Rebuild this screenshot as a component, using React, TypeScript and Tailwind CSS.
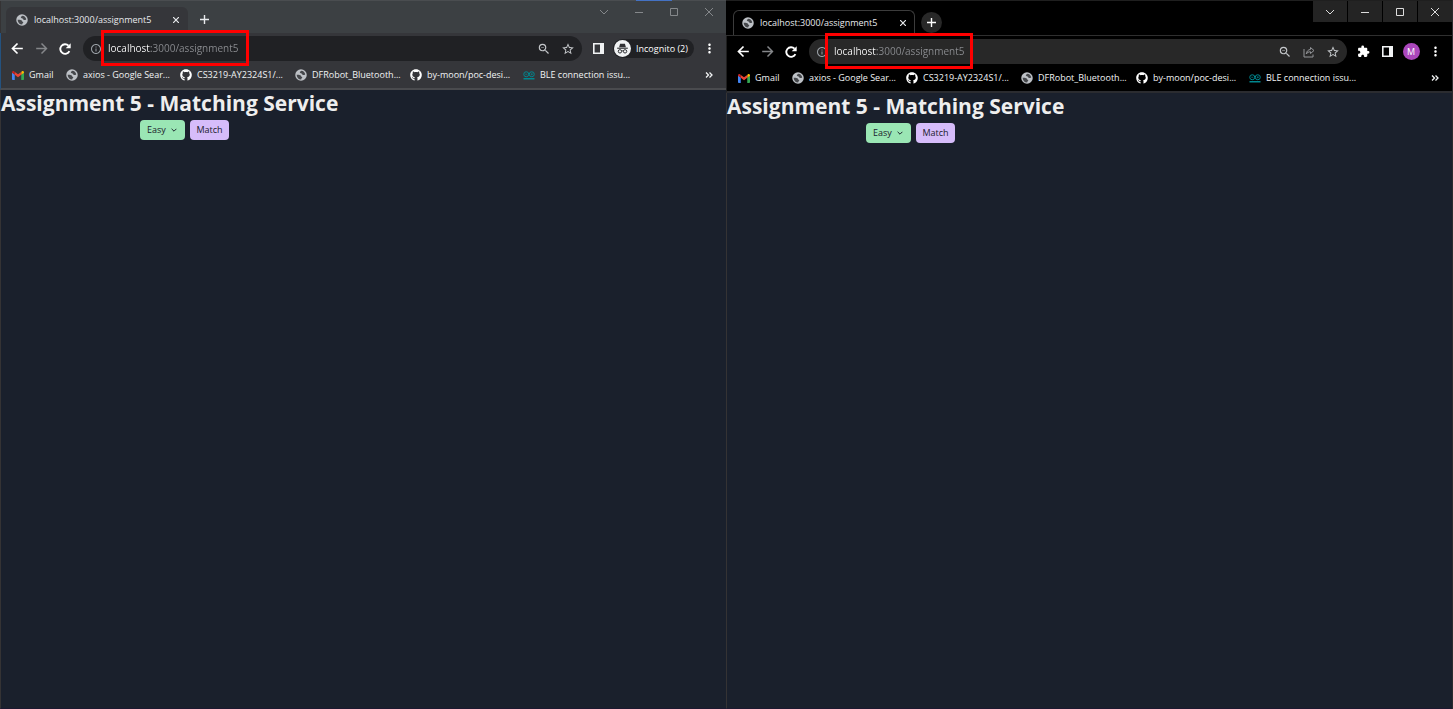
import type { ReactNode } from 'react';
import { FaGithub } from 'react-icons/fa';
import {
  MdExtension,
  MdInfoOutline,
  MdMoreVert,
  MdStarBorder,
  MdZoomOut,
} from 'react-icons/md';

function BackIcon() {
  return (
    <svg viewBox="0 0 24 24" className="size-[15px]" fill="none" stroke="currentColor" strokeWidth="2.700">
      <path d="M20.500 12H5M12 4l-8 8 8 8" />
    </svg>
  );
}

function ForwardIcon() {
  return (
    <svg viewBox="0 0 24 24" className="size-[15px] text-[#85878a]" fill="none" stroke="currentColor" strokeWidth="2.300">
      <path d="M3.500 12H19M12 4l8 8-8 8" />
    </svg>
  );
}

function ReloadIcon() {
  return (
    <svg viewBox="0 0 24 24" className="size-4">
      <path
        d="M18.600 15.200A7.200 7.200 0 1 1 17.300 7"
        fill="none"
        stroke="currentColor"
        strokeWidth="2.800"
      />
      <path d="M20.500 3.500V11H13z" fill="currentColor" />
    </svg>
  );
}

function GlobeIcon() {
  return (
    <svg viewBox="0 0 24 24" className="size-3 shrink-0">
      <circle cx="12" cy="12" r="11.500" fill="#bdc1c6" />
      <path d="M12.500 3.500c4 .3 7.300 3 8 7-1.500 2-4 2.300-5.500.8-1-.9-.6-2.100-2-2.400-1.800-.4-3.300-.6-3.300-2.300 0-1.700 1.800-1.300 2.800-3.100z" fill="#45474b" />
      <path d="M3.200 11.500c3-.4 6.500-.2 8.300 1.600 1.300 1.400.6 2.700 2.500 3.100.8.200.6 1.800-.6 2.500-.8.500-1 1.500-1 2.300-5 .2-9-4-9.200-9.500z" fill="#45474b" />
    </svg>
  );
}

function GmailIcon() {
  return (
    <svg viewBox="0 0 24 18" className="h-[9px] w-3">
      <path d="M0 3v13.400c0 .9.7 1.600 1.600 1.600h3.900V7.100z" fill="#4285f4" />
      <path d="M18.500 18h3.900c.9 0 1.600-.7 1.600-1.600V3l-5.500 4.100z" fill="#34a853" />
      <path d="M18.500 1.800v5.900L24 3.600V2.500C24 .4 21.600-.8 19.900.5z" fill="#fbbc04" />
      <path d="M5.500 7.700V1.800L12 6.700l6.500-4.900v5.900L12 12.600z" fill="#ea4335" />
      <path d="M0 2.500v1.100l5.500 4.100V1.800L4.100.5C2.400-.8 0 .4 0 2.500z" fill="#c5221f" />
    </svg>
  );
}

function ArduinoIcon() {
  return (
    <svg viewBox="0 0 24 18" className="h-[9px] w-3" fill="none" stroke="#00878f" strokeWidth="2">
      <circle cx="6.500" cy="6.500" r="5" />
      <circle cx="17.500" cy="6.500" r="5" />
      <path d="M4.500 6.500h4M15.500 6.500h4M17.500 4.500v4" strokeWidth="1.500" />
      <path d="M1 15.500h22" strokeWidth="3" />
    </svg>
  );
}

function IncognitoIcon() {
  return (
    <svg viewBox="0 0 24 24" className="size-[17px]">
      <circle cx="12" cy="12" r="12" fill="#f1f3f4" />
      <path d="M8.600 5.200h6.800l1.400 5.200H7.200z" fill="#303134" />
      <path d="M4.500 11.600h15" stroke="#303134" strokeWidth="1.600" />
      <g fill="none" stroke="#303134" strokeWidth="1.400">
        <circle cx="8.400" cy="16" r="2.400" />
        <circle cx="15.600" cy="16" r="2.400" />
        <path d="M10.800 15.600c.8-.5 1.600-.5 2.400 0" />
      </g>
    </svg>
  );
}

function SidePanelIcon() {
  return (
    <svg viewBox="0 0 11 11" className="size-[11px]">
      <path d="M.8.800h9.400v9.400H.8z" fill="none" stroke="#f1f3f4" strokeWidth="1.600" />
      <path d="M7 0h4v11H7z" fill="#f1f3f4" />
    </svg>
  );
}

function ShareIcon() {
  return (
    <svg viewBox="0 0 24 24" className="size-3 text-[#949699]" fill="none" stroke="currentColor" strokeWidth="2">
      <path d="M2 6v16h18v-5" />
      <path d="M15 3l7 6-7 6v-3.500c-4 0-6.500 1.500-8.500 4.500.5-5 3.500-8.500 8.500-9.200z" />
    </svg>
  );
}

function ChevronIcon() {
  return (
    <svg viewBox="0 0 10 10" className="size-[10px]" fill="none" stroke="currentColor">
      <path d="M1 3l4 4 4-4" />
    </svg>
  );
}

const windowControls: { label: string; icon: ReactNode }[] = [
  { label: 'Search tabs', icon: <ChevronIcon /> },
  {
    label: 'Minimize',
    icon: (
      <svg viewBox="0 0 8 8" className="size-2" stroke="currentColor">
        <path d="M0 4.500h8" />
      </svg>
    ),
  },
  {
    label: 'Maximize',
    icon: (
      <svg viewBox="0 0 8 8" className="size-2" fill="none" stroke="currentColor">
        <path d="M.5.5h7v7h-7z" />
      </svg>
    ),
  },
  {
    label: 'Close',
    icon: (
      <svg viewBox="0 0 8 8" className="size-2" stroke="currentColor">
        <path d="M0 0l8 8M8 0L0 8" />
      </svg>
    ),
  },
];

const github = <FaGithub className="size-3 text-white" />;

const bookmarks: { label: string; icon: ReactNode; width: string }[] = [
  { label: 'Gmail', icon: <GmailIcon />, width: 'w-[54px]' },
  { label: 'axios - Google Sear...', icon: <GlobeIcon />, width: 'w-[114px]' },
  { label: 'CS3219-AY2324S1/...', icon: github, width: 'w-[115px]' },
  { label: 'DFRobot_Bluetooth...', icon: <GlobeIcon />, width: 'w-[115px]' },
  { label: 'by-moon/poc-desi...', icon: github, width: 'w-[113px]' },
  { label: 'BLE connection issu...', icon: <ArduinoIcon />, width: 'w-[115px]' },
];

function IconButton({ label, children }: { label: string; children: ReactNode }) {
  return (
    <button aria-label={label} className="flex size-6 shrink-0 items-center justify-center">
      {children}
    </button>
  );
}

function AssignmentPage() {
  return (
    <main className="flex-1 border-b border-l border-b-[#1c1830] border-l-[#353334] bg-[#1a202c]">
      <h1 className="text-[21px] leading-[26px] font-bold whitespace-nowrap text-[#eeeeee]">
        Assignment 5 - Matching Service
      </h1>
      <div className="mt-1 ml-[139px] flex gap-[5px] text-[9px] text-[#1a202c]">
        <div className="grid items-center">
          <select
            aria-label="Difficulty"
            className="col-start-1 row-start-1 h-5 w-[45px] appearance-none rounded-[4px] bg-[#9ae6b4] pl-[7px] text-[9px]"
          >
            <option>Easy</option>
            <option>Medium</option>
            <option>Hard</option>
          </select>
          <svg
            viewBox="0 0 10 10"
            className="pointer-events-none col-start-1 row-start-1 mr-2 size-[6px] justify-self-end"
            fill="none"
            stroke="currentColor"
            strokeWidth="1.600"
          >
            <path d="M1 3l4 4 4-4" />
          </svg>
        </div>
        <button className="h-5 w-[39px] rounded-[4px] bg-[#d6bcfa]">Match</button>
      </div>
    </main>
  );
}

function BrowserWindow({ incognito }: { incognito: boolean }) {
  const id = incognito ? 'address-incognito' : 'address';
  return (
    <section className="flex min-w-0 flex-col">
      {incognito ? (
        <div className="flex h-px justify-end bg-[#4a4d50]">
          <div className="mr-[54px] w-9 bg-[#4472c4]" />
        </div>
      ) : (
        <div className="h-px bg-[#1f1f1f]" />
      )}

      <div
        className={
          incognito
            ? 'flex h-8 items-start border-l border-[#353334] bg-[#3c4043] pl-[5px]'
            : 'flex h-[35px] items-start border-b border-[#2f2f2f] bg-black pl-[7px]'
        }
      >
        <div
          className={
            incognito
              ? 'mt-[6px] flex h-[26px] w-[182px] items-center rounded-t-md bg-[#35363a] pr-[6px] pl-[10px]'
              : 'mt-[9px] flex h-[25px] w-[182px] items-center rounded-t-md border border-b-0 border-[#3c3c3c] pr-[5px] pl-2'
          }
        >
          <GlobeIcon />
          <span className="ml-[6px] flex-1 text-[9px] text-[#e8eaed]">localhost:3000/assignment5</span>
          <button aria-label="Close tab" className="flex size-3 items-center justify-center text-[#e8eaed]">
            <svg viewBox="0 0 6 6" className="size-[6px]" stroke="currentColor" strokeWidth="1.200">
              <path d="M0 0l6 6M6 0L0 6" />
            </svg>
          </button>
        </div>
        <button
          aria-label="New tab"
          className={
            incognito
              ? 'mt-2 ml-[6px] flex size-[21px] items-center justify-center text-[#e8eaed]'
              : 'mt-[11px] ml-[6px] flex size-[21px] items-center justify-center rounded-full bg-[#282828] text-white'
          }
        >
          <svg viewBox="0 0 9 9" className="size-[9px]" stroke="currentColor" strokeWidth="1.400">
            <path d="M4.500 0v9M0 4.500h9" />
          </svg>
        </button>
        <div className="ml-auto flex gap-px">
          {windowControls.map((control) => (
            <button
              key={control.label}
              aria-label={control.label}
              className={
                incognito
                  ? 'flex h-[21px] w-[34px] items-center justify-center text-[#85888b]'
                  : 'flex h-[21px] w-[34px] items-center justify-center bg-[#242424] text-[#dddddd]'
              }
            >
              {control.icon}
            </button>
          ))}
        </div>
      </div>

      <div
        className={
          incognito
            ? 'border-b-2 border-l border-b-[#4a4b4e] border-l-[#24527f] bg-[#35363a]'
            : 'border-b-2 border-l border-b-[#2b2c30] border-l-[#1f1f1f] bg-black'
        }
      >
        <div className="flex h-[31px] items-center pr-[5px] pl-1 text-white">
          <IconButton label="Back">
            <BackIcon />
          </IconButton>
          <IconButton label="Forward">
            <ForwardIcon />
          </IconButton>
          <IconButton label="Reload">
            <ReloadIcon />
          </IconButton>
          <div
            className={
              incognito
                ? 'relative ml-[6px] flex h-[25px] flex-1 items-center rounded-full bg-[#202124] pr-[2px] pl-[7px] text-[#c4c7ca]'
                : 'relative ml-[6px] flex h-[25px] flex-1 items-center rounded-full bg-[#282828] pr-[2px] pl-[7px] text-[#c4c7ca]'
            }
          >
            <label htmlFor={id} aria-label="Address">
              <MdInfoOutline className="size-3 text-[#9aa0a6]" />
            </label>
            <input
              id={id}
              defaultValue="localhost:3000/assignment5"
              className="ml-[6px] min-w-0 flex-1 bg-[linear-gradient(90deg,#ffffff_43px,#8b8d91_43px)] bg-clip-text text-[10px] text-transparent outline-none"
            />
            <IconButton label="Zoom">
              <MdZoomOut className="size-[14px]" />
            </IconButton>
            {!incognito && (
              <IconButton label="Share">
                <ShareIcon />
              </IconButton>
            )}
            <IconButton label="Bookmark this tab">
              <MdStarBorder className="size-[14px]" />
            </IconButton>
            <div
              className={
                incognito
                  ? 'pointer-events-none absolute -top-[6px] left-[18px] h-9 w-[148px] border-3 border-[#ff0000]'
                  : 'pointer-events-none absolute -top-[6px] left-4 h-9 w-[148px] border-3 border-[#ff0000]'
              }
            />
          </div>
          <div className="ml-1 flex items-center">
            {!incognito && (
              <IconButton label="Extensions">
                <MdExtension className="size-[13px]" />
              </IconButton>
            )}
            <IconButton label="Side panel">
              <SidePanelIcon />
            </IconButton>
            {incognito ? (
              <button className="mr-[3px] ml-[3px] flex h-[19px] w-[81px] items-center gap-[5px] rounded-full bg-[#202124] pl-px text-[9px] whitespace-nowrap">
                <IncognitoIcon />
                Incognito (2)
              </button>
            ) : (
              <IconButton label="Profile">
                <span className="flex size-[17px] items-center justify-center rounded-full bg-[#ab47bc] text-[9px]">M</span>
              </IconButton>
            )}
            <IconButton label="Menu">
              <MdMoreVert className="size-[15px]" />
            </IconButton>
          </div>
        </div>

        <nav className="mb-[2px] flex h-[22px] items-center pr-[13px] pl-[11px] text-[9px] text-[#f1f3f4]">
          {bookmarks.map((bookmark) => (
            <a
              key={bookmark.label}
              href="#"
              className={`flex shrink-0 items-center gap-[5px] whitespace-nowrap ${bookmark.width}`}
            >
              {bookmark.icon}
              {bookmark.label}
            </a>
          ))}
          <button aria-label="More bookmarks" className="ml-auto">
            <svg viewBox="0 0 8 6" className="h-[6px] w-2" fill="none" stroke="currentColor" strokeWidth="1.300">
              <path d="M1 .5L3.500 3 1 5.500M4.500.5L7 3 4.500 5.500" />
            </svg>
          </button>
        </nav>
      </div>

      <AssignmentPage />
    </section>
  );
}

export default function App() {
  return (
    <div className="grid min-h-screen grid-cols-2 bg-[#2b2b2e] pr-px font-['Open_Sans',sans-serif]">
      <BrowserWindow incognito />
      <BrowserWindow incognito={false} />
    </div>
  );
}
